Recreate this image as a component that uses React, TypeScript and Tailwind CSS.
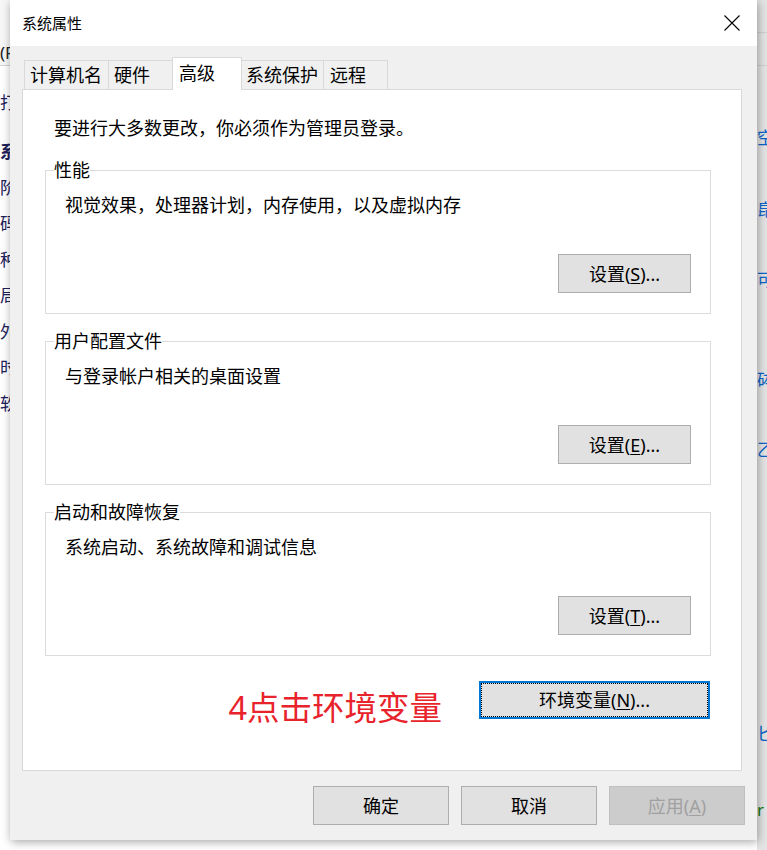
import type { ReactNode } from 'react';

const FONT = "[font-family:'Noto_Sans','Noto_Sans_CJK_SC',sans-serif]";

function WinButton({ children, className = '', disabled = false }: { children: ReactNode; className?: string; disabled?: boolean }) {
  return (
    <button
      type="button"
      className={`flex h-[39px] items-center justify-center border text-[18px] leading-[24px] ${
        disabled ? 'border-[#bfbfbf] bg-[#cccccc] text-[#a0a0a0]' : 'border-[#adadad] bg-[#e1e1e1] text-black'
      } ${className}`}
    >
      {children}
    </button>
  );
}

function GroupBox({ title, desc, mnemonic, first = false }: { title: string; desc: string; mnemonic: string; first?: boolean }) {
  return (
    <fieldset className={`${first ? 'mt-[18px]' : 'mt-[15px]'} ml-[22px] w-[666px] border border-[#dcdcdc] p-0`}>
      <legend className="ml-[8px] p-0 text-[18px] leading-[24px]">{title}</legend>
      <div className="flex flex-col pl-[19px] pr-[19px] pt-[11px] pb-[20px]">
        <p className="text-[18px] leading-[24px]">{desc}</p>
        <WinButton className="mt-[37px] w-[133px] self-end">
          设置(<span className="underline underline-offset-2">{mnemonic}</span>)...
        </WinButton>
      </div>
    </fieldset>
  );
}

function CloseIcon() {
  return (
    <svg width="16" height="16" viewBox="0 0 16 16" fill="none" stroke="#000" strokeWidth="1.1">
      <path d="M0.5 0.5 L15.5 15.5 M15.5 0.5 L0.5 15.5" />
    </svg>
  );
}

// strip of the window behind, mostly hidden by the dialog
function LeftStrip() {
  const chars = ['阶', '码', '种', '局', '外', '时', '软'];
  return (
    <div className="w-[10px] shrink-0 overflow-hidden text-[17px] text-[#20205a]">
      <div className="flex h-[66px] items-end whitespace-nowrap border-b border-[#d4d4d4] bg-[#f7f7f7] pb-[2px] leading-[20px] text-[#222]">
        (F
      </div>
      <div className="mt-[19px] whitespace-nowrap leading-[36px]">打</div>
      <div className="mt-[13px] whitespace-nowrap font-bold leading-[36px]">系</div>
      {chars.map((c) => (
        <div key={c} className="whitespace-nowrap leading-[36px]">
          {c}
        </div>
      ))}
    </div>
  );
}

function RightStrip() {
  return (
    <div className="flex w-[10px] shrink-0 flex-col overflow-hidden bg-[#e4e4e4] text-[17px] leading-[20px] text-[#0a64c8]">
      <div className="h-[33px] shrink-0 border-b border-[#d0d0d0]" />
      <div className="h-[33px] shrink-0 border-b border-[#d0d0d0]" />
      <div className="mt-[62px] whitespace-nowrap">空</div>
      <div className="mt-[52px] whitespace-nowrap">皍</div>
      <div className="mt-[50px] whitespace-nowrap">可</div>
      <div className="mt-[80px] whitespace-nowrap">砵</div>
      <div className="mt-[50px] whitespace-nowrap">乙</div>
      <div className="mt-[264px] whitespace-nowrap">匕</div>
      <div className="mt-[56px] whitespace-nowrap text-[#107c10]">r</div>
    </div>
  );
}

export default function App() {
  return (
    <div className={`flex h-[850px] w-[767px] overflow-hidden bg-white text-black ${FONT}`}>
      <LeftStrip />

      <div className="h-[850px] w-[747px] shrink-0">
        <div className="relative z-10 flex h-[840px] flex-col bg-[#f0f0f0] shadow-[1px_2px_9px_rgba(0,0,0,0.35)]">
          {/* title bar */}
          <div className="flex h-[46px] shrink-0 items-center justify-between bg-white pl-[12px] pr-[17px]">
            <span className="text-[15px] leading-[20px]">系统属性</span>
            <CloseIcon />
          </div>

          {/* tabs */}
          <div className="flex h-[43px] shrink-0 items-end pl-[14px] text-[18px] leading-[24px]">
            <div className="flex h-[29px] w-[84px] items-center border-l border-t border-[#d9d9d9] pl-[5px]">计算机名</div>
            <div className="flex h-[29px] w-[64px] items-center border-l border-t border-[#d9d9d9] pl-[5px]">硬件</div>
            <div className="relative z-10 -mb-px h-[33px] w-[70px] border-l border-r border-t border-[#d9d9d9] bg-white pl-[6px] pt-[3px]">高级</div>
            <div className="flex h-[29px] w-[81px] items-center border-t border-[#d9d9d9] pl-[4px]">系统保护</div>
            <div className="flex h-[29px] w-[65px] items-center border-l border-r border-t border-[#d9d9d9] pl-[6px]">远程</div>
          </div>

          {/* panel */}
          <div className="ml-[12px] flex h-[682px] w-[720px] shrink-0 flex-col border border-[#d9d9d9] bg-white">
            <p className="ml-[31px] mt-[26px] text-[18px] leading-[24px]">要进行大多数更改，你必须作为管理员登录。</p>

            <GroupBox first title="性能" desc="视觉效果，处理器计划，内存使用，以及虚拟内存" mnemonic="S" />
            <GroupBox title="用户配置文件" desc="与登录帐户相关的桌面设置" mnemonic="E" />
            <GroupBox title="启动和故障恢复" desc="系统启动、系统故障和调试信息" mnemonic="T" />

            <div className="mt-[25px] flex items-start justify-end gap-[37px] pr-[31px]">
              <span className="mt-[11px] text-[32.5px] leading-[32px] text-[#e8232b]">4点击环境变量</span>
              <button type="button" className="h-[38px] w-[231px] border-2 border-[#0078d7] bg-[#e1e1e1]">
                <div className="flex h-full w-full items-center justify-center border border-dotted border-black text-[18px] leading-[24px]">
                  环境变量(<span className="underline underline-offset-2">N</span>)...
                </div>
              </button>
            </div>
          </div>

          {/* footer buttons */}
          <div className="mt-[15px] flex justify-end gap-[12px] pr-[12px]">
            <WinButton className="w-[136px]">确定</WinButton>
            <WinButton className="w-[136px]">取消</WinButton>
            <WinButton disabled className="w-[136px]">
              应用(<span className="underline underline-offset-2">A</span>)
            </WinButton>
          </div>
        </div>
      </div>

      <RightStrip />
    </div>
  );
}
